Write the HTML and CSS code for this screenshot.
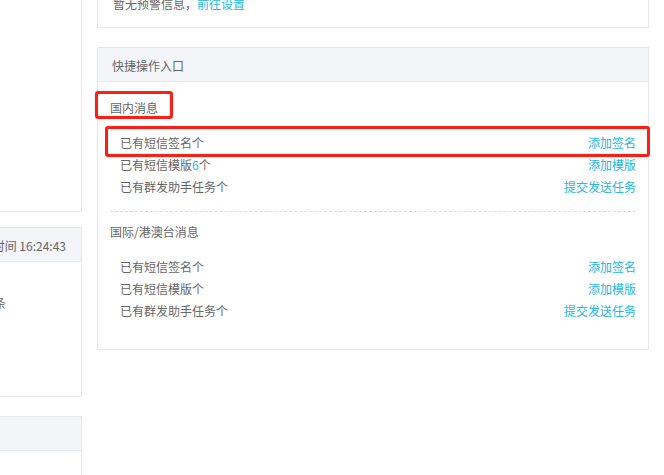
FILE: index.html
```html
<!DOCTYPE html>
<html lang="zh-CN">
<head>
	<meta charset="UTF-8">
	<meta name="viewport" content="width=device-width, initial-scale=1.0">
	<title>控制台</title>
	<link rel="stylesheet" href="styles.css">
</head>
<body>
	<div class="page">
		<!-- 左侧统计 -->
		<div class="col-left">
			<div class="panel panel-top">
				<div class="panel-body overview"></div>
			</div>

			<div class="panel panel-send">
				<div class="panel-heading heading-right">最后更新时间 16:24:43</div>
				<div class="panel-body send-body">
					<p class="stat-line">今日发送成功 0 条</p>
				</div>
			</div>

			<div class="panel panel-last">
				<div class="panel-heading"></div>
				<div class="panel-body"></div>
			</div>
		</div>

		<!-- 右侧 -->
		<div class="col-right">
			<div class="panel panel-warn">
				<div class="panel-body warn-body">
					暂无预警信息，<a href="#" class="link">前往设置</a>
				</div>
			</div>

			<div class="panel panel-quick">
				<div class="panel-heading">快捷操作入口</div>
				<div class="panel-body quick-body">
					<div class="quick-section">
						<div class="section-title"><span class="mark mark-title">国内消息</span></div>
						<ul class="quick-list">
							<li class="mark mark-row"><span>已有短信签名个</span><a href="#" class="link">添加签名</a></li>
							<li><span>已有短信模版<em class="num">6</em>个</span><a href="#" class="link">添加模版</a></li>
							<li><span>已有群发助手任务个</span><a href="#" class="link">提交发送任务</a></li>
						</ul>
					</div>
					<div class="quick-section">
						<div class="section-title">国际/港澳台消息</div>
						<ul class="quick-list">
							<li><span>已有短信签名个</span><a href="#" class="link">添加签名</a></li>
							<li><span>已有短信模版个</span><a href="#" class="link">添加模版</a></li>
							<li><span>已有群发助手任务个</span><a href="#" class="link">提交发送任务</a></li>
						</ul>
					</div>
				</div>
			</div>
		</div>
	</div>
</body>
</html>
```

FILE: styles.css
```css
body {
	font-family: "Noto Sans CJK SC", "Microsoft YaHei", sans-serif;
	font-size: 12px;
	color: #666;
	margin: 0;
	padding: 0;
	background-color: #fff;
	overflow: hidden;
}
.page {
	display: flex;
	align-items: flex-start;
	gap: 15px;
	margin-top: -22px;
}
.col-left {
	flex: none;
	width: 302px;
	margin-left: -220px;
}
.col-right {
	flex: none;
	width: 552px;
}
.panel {
	background-color: #fff;
	border: 1px solid #e7eaec;
}
.panel-heading {
	height: 34px;
	box-sizing: border-box;
	padding: 3px 14px 0;
	line-height: 30px;
	background-color: #f3f5f8;
	border-bottom: 1px solid #e7eaec;
	color: #666;
}
.heading-right {
	text-align: right;
	padding-right: 15px;
}
.link {
	color: #23b7e5;
	text-decoration: none;
}

/* 左侧 */
.overview {
	height: 232px;
}
.panel-send {
	margin-top: 15px;
}
.send-body {
	height: 134px;
	box-sizing: border-box;
	padding: 31px 75px 0 15px;
	text-align: right;
}
.stat-line {
	margin: 0;
	line-height: 20px;
}
.panel-last {
	margin-top: 19px;
}
.panel-last .panel-body {
	height: 120px;
}

/* 右侧 */
.warn-body {
	padding: 15px 15px 13px;
	line-height: 20px;
}
.panel-quick {
	margin-top: 19px;
}
.quick-body {
	padding: 16px 12px 14px;
}
.quick-section {
	padding-bottom: 13px;
}
.quick-section + .quick-section {
	border-top: 1px dashed #ddd;
	padding-top: 10px;
}
.section-title {
	line-height: 20px;
	color: #666;
}
.quick-list {
	list-style: none;
	margin: 14px 0 0;
	padding: 0 0 0 10px;
}
.quick-list li {
	display: flex;
	justify-content: space-between;
	line-height: 22px;
}
.num {
	font-style: normal;
	color: #23b7e5;
}

/* 标注框 */
.mark {
	position: relative;
}
.mark::after {
	content: "";
	position: absolute;
	border: 3px solid #fe1e14;
	border-radius: 3px;
	pointer-events: none;
}
.mark-title {
	display: inline-block;
}
.mark-title::after {
	top: -7px;
	bottom: -1px;
	left: -15px;
	right: -15px;
}
.mark-row::after {
	top: -6px;
	bottom: -3px;
	left: -15px;
	right: -14px;
}
```
